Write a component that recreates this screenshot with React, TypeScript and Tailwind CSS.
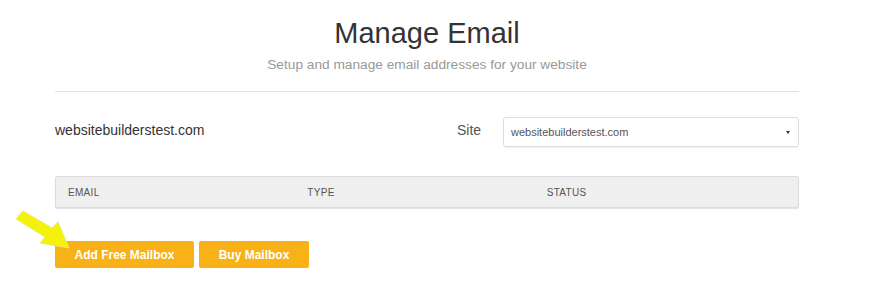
import React from "react";

export default function App() {
  return (
    <div className="relative w-[869px] h-[296px] bg-white overflow-hidden" style={{ fontFamily: '"Liberation Sans", Arial, sans-serif' }}>
      <div className="ml-[55px] w-[744px] pt-[15px]">
        <h1 className="text-center text-[29px] leading-[36px] text-[#333]">Manage Email</h1>
        <p className="text-center text-[13.7px] leading-[20px] text-[#999] mt-[4px]">Setup and manage email addresses for your website</p>
        <div className="mt-[16px] h-px bg-[#e3e3e3]" />
        <div className="mt-[25px] flex items-center h-[30px]">
          <div className="flex-1 text-[14px] text-[#333] -mt-[4px]">websitebuilderstest.com</div>
          <div className="w-[46px] text-[14px] text-[#555] -mt-[4px]">Site</div>
          <div className="w-[296px] h-[30px] border border-[#ddd] rounded-[3px] flex items-center justify-between pl-[7px] pr-[8px] shadow-[0_1px_1px_rgba(0,0,0,0.06)]">
            <span className="text-[11px] text-[#555]">websitebuilderstest.com</span>
            <span className="w-0 h-0 border-l-[2.5px] border-r-[2.5px] border-t-[3px] border-l-transparent border-r-transparent border-t-[#333]" />
          </div>
        </div>
        <div className="mt-[29px] h-[32px] bg-[#efefef] border border-[#ddd] rounded-[2px] shadow-[0_1px_1px_rgba(0,0,0,0.12)] grid grid-cols-3 items-center px-[12px] text-[10px] text-[#555] tracking-[0.3px]">
          <span>EMAIL</span>
          <span>TYPE</span>
          <span>STATUS</span>
        </div>
        <div className="mt-[33px] flex gap-[5px]">
          <button className="h-[27px] w-[139px] bg-[#f8b117] rounded-[2px] text-white text-[12px] font-bold">Add Free Mailbox</button>
          <button className="h-[27px] w-[110px] bg-[#f8b117] rounded-[2px] text-white text-[12px] font-bold">Buy Mailbox</button>
        </div>
      </div>
      <svg className="absolute left-[14px] top-[208px]" width="66" height="48" viewBox="0 0 66 48">
        <polygon points="9,3 38,20 44,14 55,40 26,35 31,29 2,11" fill="#f5f20a" stroke="#eceb6a" strokeWidth="1" strokeLinejoin="round" />
      </svg>
    </div>
  );
}
